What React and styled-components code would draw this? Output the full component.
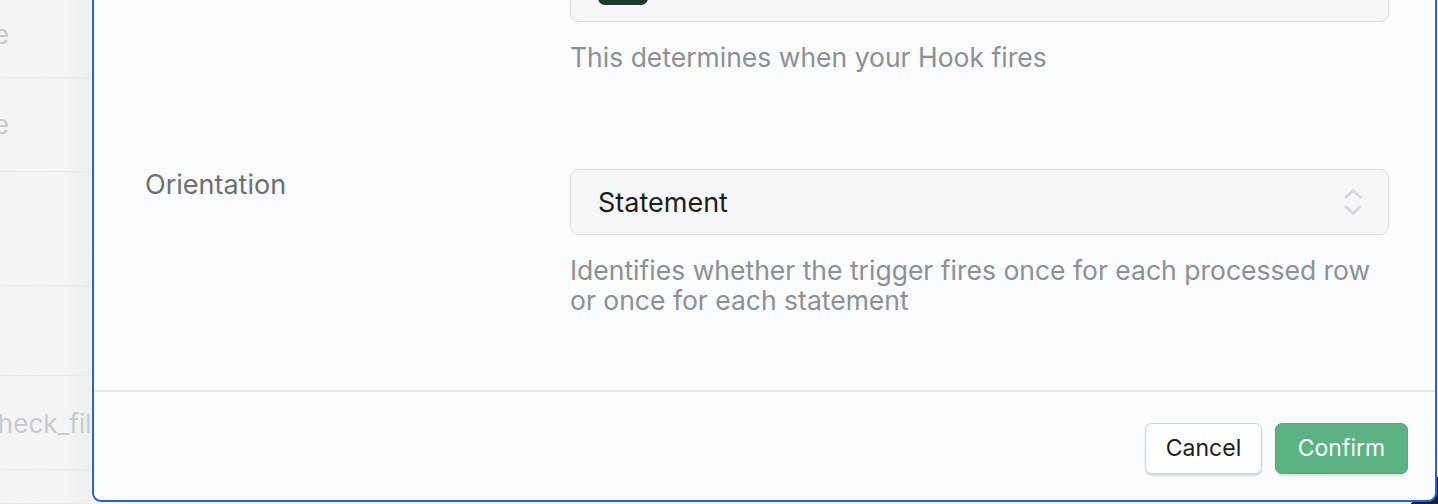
import React from 'react';
import styled, { createGlobalStyle } from 'styled-components';

const GlobalStyle = createGlobalStyle`
  html, body {
    margin: 0;
    padding: 0;
    height: 100%;
    overflow: hidden;
    background: #f3f4f6;
  }
  body {
    font-family: Inter, 'Noto Sans', sans-serif;
    -webkit-font-smoothing: antialiased;
  }
  #root { height: 100%; }
`;

const Page = styled.div`
  display: flex;
  height: 504px;
  padding-right: 1px;
  background: linear-gradient(135deg, #f3f4f6 0%, #f3f4f6 98.6%, #1b1f3d 98.6%);
`;

const SideList = styled.div`
  width: 90px;
  margin-right: 2px;
  display: flex;
  flex-direction: column;
  background: linear-gradient(90deg, #f3f4f6 0%, #f4f5f7 70%, #eceef0 100%);
  overflow: hidden;
`;

const SideRow = styled.div`
  height: ${p => p.$h}px;
  flex-shrink: 0;
  border-bottom: 1px solid #e8e9eb;
  display: flex;
  align-items: center;
  font-size: 26px;
  color: #c8cacd;
  white-space: nowrap;
  box-sizing: border-box;

  span {
    margin-left: ${p => p.$x}px;
    margin-top: ${p => p.$dy}px;
  }
`;

const Modal = styled.div`
  flex: 1;
  display: flex;
  flex-direction: column;
  background: #fbfcfd;
  border: 2px solid #2962c8;
  border-top: none;
  border-radius: 0 0 9px 9px;
  height: 502px;
  overflow: hidden;
  box-sizing: border-box;
`;

const Body = styled.div`
  flex: 1;
  display: flex;
  flex-direction: column;
  gap: 97px;
  padding: 0 46px 0 51px;
  margin-top: -44px;
`;

const Field = styled.div`
  display: grid;
  grid-template-columns: 425px 1fr;
`;

const Label = styled.div`
  font-size: 27px;
  line-height: 30px;
  padding-top: 1px;
  color: #6a6f75;
`;

const Control = styled.div`
  display: flex;
  flex-direction: column;
  gap: 20px;
`;

const SelectBox = styled.div`
  position: relative;
  height: 66px;
  box-sizing: border-box;
  border: 1.5px solid #dcdde1;
  border-radius: 9px;
  background: #f6f7f8;
  display: flex;
  align-items: center;
  padding: 0 27px;
  font-size: 27px;
  color: #1c1c1c;
`;

const Badge = styled.div`
  width: 50px;
  height: 32px;
  border-radius: 7px;
  background: #1b3a2b;
  margin-top: -1px;
`;

const Chevrons = styled.svg`
  position: absolute;
  right: 26px;
  top: 50%;
  transform: translateY(-50%);
`;

const Help = styled.div`
  font-size: 26.5px;
  line-height: 30px;
  color: #8b9096;
`;

const Footer = styled.div`
  height: 110px;
  border-top: 2px solid #e6e7e9;
  display: flex;
  align-items: center;
  justify-content: flex-end;
  gap: 13px;
  padding: 4px 27px 0 0;
  box-sizing: border-box;
`;

const Button = styled.button`
  height: 51px;
  width: ${p => (p.$primary ? 133 : 117)}px;
  padding: 0;
  font-family: inherit;
  font-size: 23px;
  border-radius: 7px;
  cursor: pointer;
  color: ${p => (p.$primary ? '#ffffff' : '#1c1c1c')};
  background: ${p => (p.$primary ? '#5db283' : '#ffffff')};
  border: 1.5px solid ${p => (p.$primary ? '#56a87a' : '#d5d6da')};
  box-shadow: 0 1.5px 2px rgba(0, 0, 0, ${p => (p.$primary ? 0.12 : 0.14)});
`;

const sideRows = [
  { h: 78, t: 'one', x: -37, dy: -8 },
  { h: 94, t: 'one', x: -37, dy: 0 },
  { h: 114, t: '' },
  { h: 90, t: '' },
  { h: 94, t: 'check_filters', x: -17, dy: 2 },
  { h: 34, t: '' },
];

export default function App() {
  return (
    <>
      <GlobalStyle />
      <Page>
        <SideList>
          {sideRows.map((r, i) => (
            <SideRow key={i} $h={r.h} $x={r.x || 0} $dy={r.dy || 0}>
              <span>{r.t}</span>
            </SideRow>
          ))}
        </SideList>
        <Modal>
          <Body>
            <Field>
              <div />
              <Control>
                <SelectBox>
                  <Badge />
                </SelectBox>
                <Help>This determines when your Hook fires</Help>
              </Control>
            </Field>
            <Field>
              <Label>Orientation</Label>
              <Control>
                <SelectBox>
                  Statement
                  <Chevrons width="18" height="28" viewBox="0 0 18 28" fill="none">
                    <path d="M2 9 L9 2.5 L16 9" stroke="#d6d8dc" strokeWidth="3" strokeLinecap="round" strokeLinejoin="round" />
                    <path d="M2 19 L9 25.5 L16 19" stroke="#d6d8dc" strokeWidth="3" strokeLinecap="round" strokeLinejoin="round" />
                  </Chevrons>
                </SelectBox>
                <Help>
                  Identifies whether the trigger fires once for each processed row or once for each statement
                </Help>
              </Control>
            </Field>
          </Body>
          <Footer>
            <Button>Cancel</Button>
            <Button $primary>Confirm</Button>
          </Footer>
        </Modal>
      </Page>
    </>
  );
}
